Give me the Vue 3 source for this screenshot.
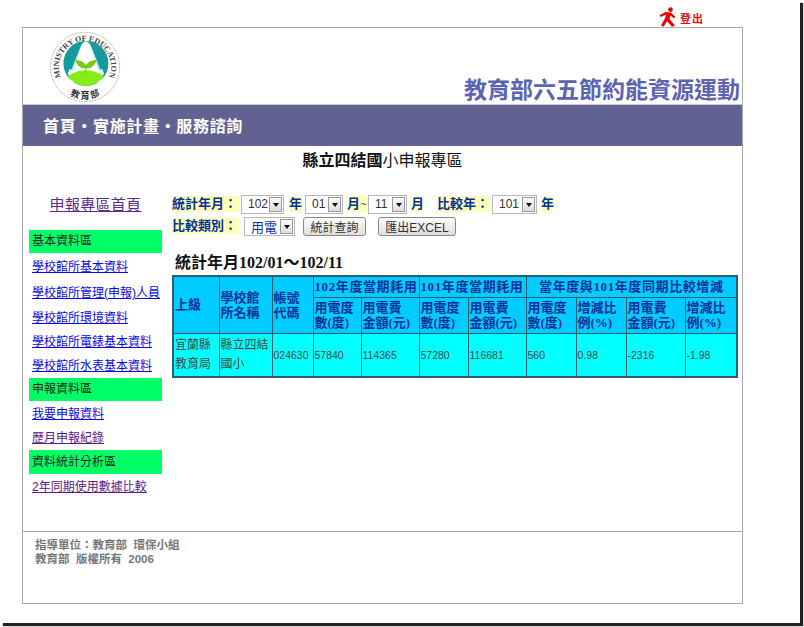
<script setup>
const menu = [
  { label: '基本資料區', head: 23 },
  { label: '學校館所基本資料', gap: 27 },
  { label: '學校館所管理(申報)人員', gap: 25 },
  { label: '學校館所環境資料', gap: 24 },
  { label: '學校館所電錶基本資料', gap: 24 },
  { label: '學校館所水表基本資料', gap: 25 },
  { label: '申報資料區', head: 23 },
  { label: '我要申報資料', gap: 24 },
  { label: '歷月申報紀錄', gap: 25, visited: true },
  { label: '資料統計分析區', head: 24 },
  { label: '2年同期使用數據比較', gap: 24, visited: true }
]
const subHeads = ['用電度<br>數(度)', '用電費<br>金額(元)', '用電度<br>數(度)', '用電費<br>金額(元)', '用電度<br>數(度)', '增減比<br>例(%)', '用電費<br>金額(元)', '增減比<br>例(%)']
const values = ['57840', '114365', '57280', '116681', '560', '0.98', '-2316', '-1.98']
const widths = [46, 53, 41, 48, 58, 49, 58, 50, 50, 59, 52]
</script>

<template>
  <div class="screen">
    <div class="page">
      <div class="logout">
        <svg class="runner" width="18" height="20" viewBox="0 0 18 20">
          <circle cx="11.5" cy="2.6" r="2.3" fill="#e80000" />
          <path d="M0.5 8.2 L6.5 5 L12 5.6 L16.5 10 L15 11.2 L11.5 8.8 L10.5 12 L16 18.5 L13 19.8 L8 14.2 L4.5 19.8 L2 18.2 L6.2 11 L7.2 7.6 L1.8 10 Z" fill="#e80000" />
        </svg>
        <span class="logout-text">登出</span>
      </div>
      <div class="frame">
        <header class="banner">
          <svg class="logo" width="72" height="72" viewBox="0 0 80 80">
            <defs>
              <path id="arcTop" d="M 19 60 A 29 29 0 1 1 61 60" />
              <path id="arcBottom" d="M 8 56 A 36 36 0 0 0 72 56" />
            </defs>
            <circle cx="40" cy="40" r="38.5" fill="#fff" stroke="#aaa" stroke-width="1" stroke-dasharray="2 1" />
            <circle cx="41" cy="36" r="25" fill="#159a9e" />
            <path d="M41 11 L33 17 L21 47 L25 57 L57 57 L61 47 L49 17 Z" fill="#fff" />
            <path d="M37 13 L25 43 L20 41 Q24 22 37 13 Z M45 13 L57 43 L62 41 Q58 22 45 13 Z" fill="#159a9e" />
            <path d="M36 15 L27 44 L25 44 Z M46 15 L55 44 L57 44 Z" fill="#9fe6ea" />
            <path d="M21 50 Q41 37 61 50 Q54 60 41 61 Q28 60 21 50 Z" fill="#86ee14" />
            <path d="M41 47 L41 41 Q33 42 30 33 Q38 33 41 39 Q44 33 52 33 Q49 42 41 41" fill="#7ccc10" stroke="#6fb90f" stroke-width="1" />
            <text class="logo-en"><textPath href="#arcTop" startOffset="50%" text-anchor="middle">MINISTRY OF EDUCATION</textPath></text>
            <text class="logo-zh"><textPath href="#arcBottom" startOffset="50%" text-anchor="middle">教 育 部</textPath></text>
          </svg>
          <h1 class="slogan">教育部六五節約能資源運動</h1>
        </header>
        <nav class="nav">首頁・實施計畫・服務諮詢</nav>
        <h2 class="page-title"><b>縣立四結國</b>小申報專區</h2>

        <div class="content">
          <aside class="side">
            <a class="side-home">申報專區首頁</a>
            <template v-for="item in menu" :key="item.label">
              <div v-if="item.head" class="side-head" :style="{ height: item.head + 'px', lineHeight: item.head + 'px' }">{{ item.label }}</div>
              <a v-else class="side-link" :class="{ visited: item.visited }" :style="{ height: item.gap + 'px' }"><span>{{ item.label }}</span></a>
            </template>
          </aside>

          <main class="main">
            <div class="filters">
              <label class="tag t1">統計年月：</label>
              <span class="sel w43"><span>102</span><i></i></span>
              <label class="tag t2">年</label>
              <span class="sel w38"><span>01</span><i></i></span>
              <label class="tag t3">月<small>~</small></label>
              <span class="sel w39"><span>11</span><i></i></span>
              <label class="tag t4">月</label>
              <label class="tag t5">比較年：</label>
              <span class="sel w45"><span>101</span><i></i></span>
              <label class="tag t6">年</label>
            </div>
            <div class="filters second">
              <label class="tag t7">比較類別：</label>
              <span class="sel w51 blue"><span>用電</span><i></i></span>
              <button class="btn b1">統計查詢</button>
              <button class="btn b2">匯出EXCEL</button>
            </div>
            <h3 class="range">統計年月102/01～102/11</h3>
            <table class="stats">
              <colgroup>
                <col v-for="(w, i) in widths" :key="i" :style="{ width: w + 'px' }" />
              </colgroup>
              <thead>
                <tr class="r1">
                  <th rowspan="2">上級</th>
                  <th rowspan="2">學校館<br>所名稱</th>
                  <th rowspan="2">帳號<br>代碼</th>
                  <th colspan="2" class="cap"><em>102</em>年度當期耗用</th>
                  <th colspan="2" class="cap"><em>101</em>年度當期耗用</th>
                  <th colspan="4" class="cap center">當年度與<em>101</em>年度同期比較增減</th>
                </tr>
                <tr class="r2">
                  <th v-for="(s, i) in subHeads" :key="i" v-html="s"></th>
                </tr>
              </thead>
              <tbody>
                <tr class="r3">
                  <td class="zh">宜蘭縣<br>教育局</td>
                  <td class="zh">縣立四結<br>國小</td>
                  <td class="num">024630</td>
                  <td v-for="(v, i) in values" :key="i" class="num">{{ v }}</td>
                </tr>
              </tbody>
            </table>
          </main>
        </div>

        <footer class="foot">
          <p>指導單位：教育部&nbsp; 環保小組</p>
          <p>教育部&nbsp; 版權所有&nbsp; 2006</p>
        </footer>
      </div>
    </div>
  </div>
</template>

<style>
html, body { margin: 0; background: #fff; overflow: hidden; }
</style>

<style scoped>
.screen { width: 804px; height: 627px; overflow: hidden; background: #fff; }
.page {
  width: 800px;
  height: 623px;
  box-sizing: border-box;
  padding-left: 22px;
  background: #fff;
  box-shadow: 3px 3px 1px #222;
  font-family: "Liberation Sans", "Noto Sans CJK TC", sans-serif;
}
.logout {
  height: 27px;
  width: 682px;
  display: flex;
  justify-content: flex-end;
  align-items: flex-end;
  gap: 3px;
}
.logout-text { color: #e01010; font-size: 11px; font-weight: 700; line-height: 14px; margin-bottom: 1px; letter-spacing: 1px; }
.frame {
  width: 721px;
  height: 577px;
  box-sizing: border-box;
  border: 1px solid #aaa;
  display: flex;
  flex-direction: column;
  position: relative;
}
.banner {
  height: 77px;
  box-sizing: border-box;
  border-bottom: 1px solid #c8c8d0;
  display: flex;
  justify-content: space-between;
  align-items: flex-start;
  padding: 3px 2px 0 26px;
}
.logo { display: block; }
.logo-en { font: 700 8.8px "Liberation Serif", serif; fill: #444; }
.logo-zh { font: 700 10px "Noto Sans CJK TC", sans-serif; fill: #333; }
.slogan {
  margin: 43px 0 0;
  font-size: 23px;
  line-height: 32px;
  font-weight: 700;
  color: #5c63b2;
}
.nav {
  height: 41px;
  line-height: 43px;
  background: #626292;
  color: #fff;
  font-size: 16px;
  font-weight: 700;
  padding-left: 20px;
  letter-spacing: .67px;
}
.page-title {
  margin: 0;
  height: 30px;
  line-height: 30px;
  text-align: center;
  font-size: 16px;
  font-weight: 400;
  color: #111;
}
.content { display: flex; padding: 14px 0 0 6px; }
.side { width: 133px; flex: none; display: flex; flex-direction: column; }
.side-home {
  height: 40px;
  line-height: 29px;
  text-align: center;
  color: #5a2d8c;
  font-size: 15px;
  letter-spacing: .3px;
  text-decoration: underline;
}
.side-head {
  background: #00ff66;
  color: #222;
  font-size: 12px;
  padding-left: 3px;
}
.side-link {
  color: #0a0ae0;
  font-size: 12px;
  box-sizing: border-box;
  padding: 0 0 2px 3px;
  display: flex;
  align-items: center;
  text-decoration: underline;
}
.side-link.visited { color: #5a1a8c; }
.main { margin-left: 10px; width: 566px; }
.filters { display: flex; align-items: center; height: 20px; margin-top: 4px; color: #003399; font-size: 13px; font-weight: 700; }
.filters.second { margin-top: 2px; }
.tag { background: #ffffb8; line-height: 16px; height: 16px; white-space: nowrap; }
.tag small { font-weight: 400; font-size: 11px; }
.t1 { width: 68px; }
.t2 { width: 13px; margin-left: 5px; }
.t3 { width: 20px; margin-left: 4px; }
.t4 { width: 11px; margin-left: 4px; }
.t5 { width: 53px; margin-left: 15px; }
.t6 { width: 12px; margin-left: 4px; }
.t7 { width: 67px; }
.t1 + .sel { margin-left: 1px; }
.t2 + .sel { margin-left: 3px; }
.t3 + .sel { margin-left: 1px; }
.t5 + .sel { margin-left: 2px; }
.t7 + .sel { margin-left: 5px; }
.sel {
  height: 19px;
  box-sizing: border-box;
  border: 1px solid #b8b8b8;
  background: #fff;
  display: flex;
  align-items: center;
  justify-content: space-between;
  padding: 1px;
  color: #333;
  font-size: 12px;
  font-weight: 400;
}
.sel.blue { color: #1030b0; font-size: 13px; }
.sel > span { padding-left: 5px; }
.sel i {
  width: 13px;
  height: 15px;
  box-sizing: border-box;
  border: 1px solid #999;
  background: linear-gradient(#fafafa, #ddd);
  position: relative;
}
.sel i::after {
  content: "";
  position: absolute;
  left: 3px;
  top: 5px;
  border: 3.5px solid transparent;
  border-top: 4px solid #111;
  border-bottom: 0;
}
.w43 { width: 43px; }
.w38 { width: 38px; }
.w39 { width: 39px; }
.w45 { width: 45px; }
.w51 { width: 51px; }
.btn {
  height: 19px;
  box-sizing: border-box;
  border: 1px solid #888;
  border-radius: 3px;
  background: linear-gradient(#fdfdfd, #ddd);
  color: #333;
  font: 400 12px "Liberation Sans", "Noto Sans CJK TC", sans-serif;
  padding: 0;
}
.b1 { width: 63px; margin-left: 8px; }
.b2 { width: 78px; margin-left: 12px; }
.range {
  margin: 15px 0 0 3px;
  height: 24px;
  font: 700 16px/24px "Liberation Serif", "Noto Sans CJK TC", serif;
  color: #111;
}
.stats {
  table-layout: fixed;
  border-collapse: collapse;
  width: 564px;
  margin-top: 0;
  border: 2px solid #2f5f6f;
  color: #003399;
}
.stats th, .stats td { border: 1px solid #1f5f6f; padding: 0 1px; text-align: left; overflow: hidden; }
.stats th {
  background: #00ccff;
  font: 700 13px/15px "Liberation Serif", "Noto Sans CJK TC", serif;
}
.stats em { font-style: normal; }
.cap { letter-spacing: .6px; }
.center { text-align: center !important; }
.r1 { height: 21px; }
.r2 { height: 36px; }
.r3 { height: 44px; }
.r3 td { background: #00ffff; color: #444; }
.zh { font-size: 12px; line-height: 19px; }
.num { font-size: 10.5px; }
.foot {
  position: absolute;
  left: 0;
  right: 0;
  top: 503px;
  border-top: 1px solid #aaa;
  padding: 6px 0 0 12px;
  color: #777;
  font-size: 11.5px;
  font-weight: 700;
}
.foot p { margin: 0; line-height: 14px; }
</style>
